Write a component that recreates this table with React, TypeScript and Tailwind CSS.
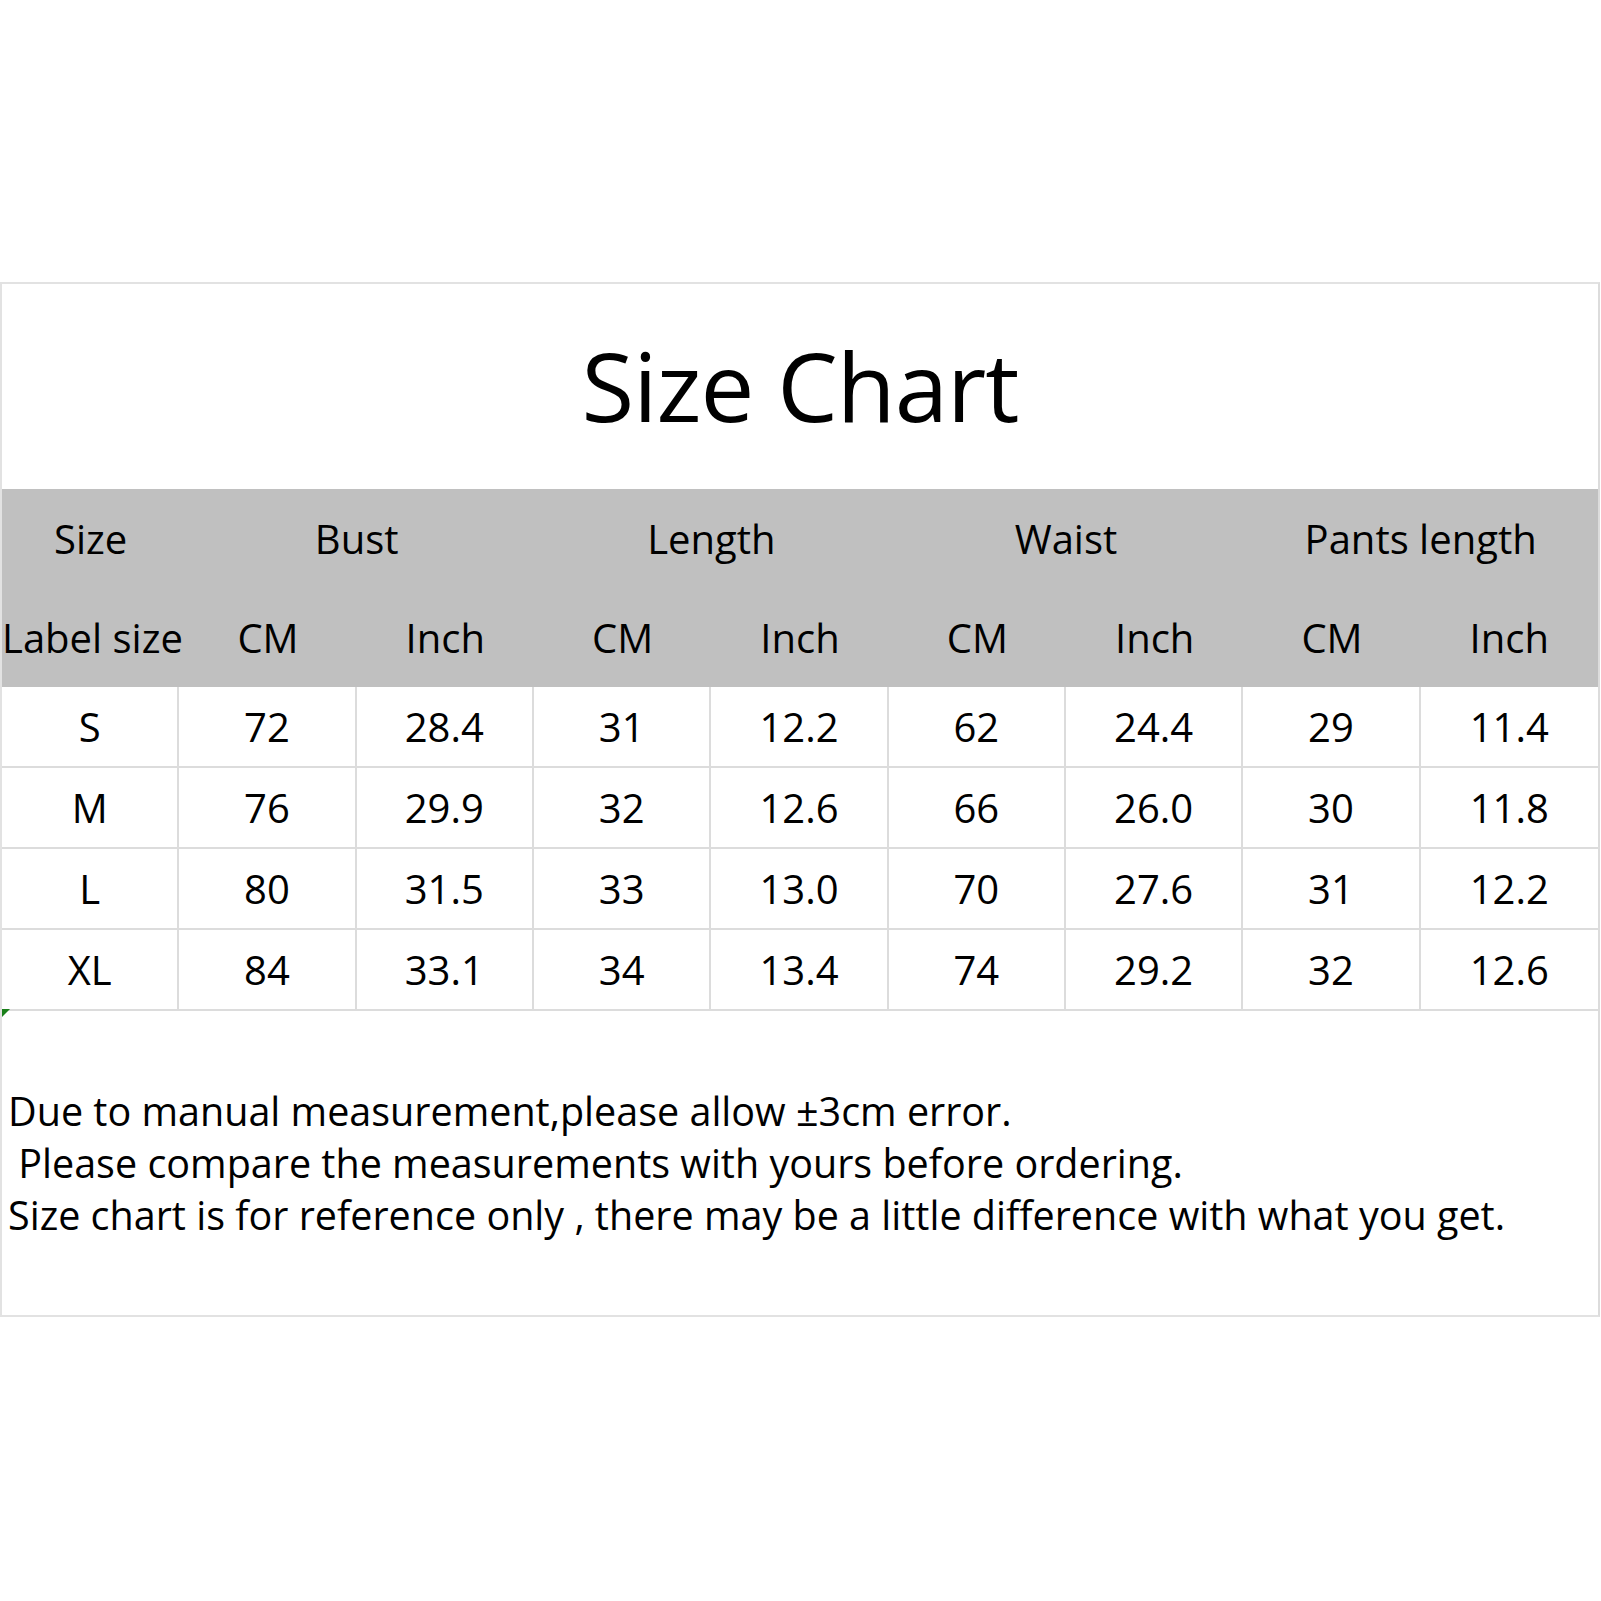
import React from "react";

const rows = [
  ["S", "72", "28.4", "31", "12.2", "62", "24.4", "29", "11.4"],
  ["M", "76", "29.9", "32", "12.6", "66", "26.0", "30", "11.8"],
  ["L", "80", "31.5", "33", "13.0", "70", "27.6", "31", "12.2"],
  ["XL", "84", "33.1", "34", "13.4", "74", "29.2", "32", "12.6"],
];

const sub = ["Label size", "CM", "Inch", "CM", "Inch", "CM", "Inch", "CM", "Inch"];

export default function App() {
  return (
    <div
      className="w-[1601px] h-[1601px] bg-white text-black"
      style={{ fontFamily: '"Open Sans", "Noto Sans", sans-serif' }}
    >
      <div className="pt-[282px]">
        <div className="w-[1600px] border-2 border-[#e2e2e2] border-r-[#dcdcdc]">
          <div className="h-[205px] flex items-center justify-center">
            <div className="text-[96px] leading-none tracking-[-1px] pb-[4px]">Size Chart</div>
          </div>
          <div className="bg-[#c0c0c0]">
            <div className="grid grid-cols-9 h-[99px] items-center text-[40px] leading-none">
              <div className="text-center">Size</div>
              <div className="col-span-2 text-center">Bust</div>
              <div className="col-span-2 text-center">Length</div>
              <div className="col-span-2 text-center">Waist</div>
              <div className="col-span-2 text-center">Pants length</div>
            </div>
            <div className="grid grid-cols-9 h-[99px] items-center text-[40px] leading-none">
              {sub.map((s, i) => (
                <div key={i} className="text-center whitespace-nowrap">
                  {s}
                </div>
              ))}
            </div>
          </div>
          {rows.map((r, ri) => (
            <div
              key={ri}
              className="grid grid-cols-9 h-[81px] border-b-2 border-[#dcdcdc] text-[40px] leading-none"
            >
              {r.map((c, ci) => (
                <div
                  key={ci}
                  className={
                    "flex items-center justify-center " +
                    (ci < 8 ? "border-r-2 border-[#dcdcdc]" : "")
                  }
                >
                  {c}
                </div>
              ))}
            </div>
          ))}
          <div className="relative h-[304px] pt-[74px] text-[39.5px] leading-[52px]">
            <div className="absolute left-0 top-[-2px] w-0 h-0 border-t-[8px] border-r-[8px] border-t-[#1a7f1a] border-r-transparent" />
            <div className="pl-[6px] whitespace-pre">Due to manual measurement,please allow ±3cm error.</div>
            <div className="pl-[6px] whitespace-pre"> Please compare the measurements with yours before ordering.</div>
            <div className="pl-[6px] whitespace-pre">Size chart is for reference only , there may be a little difference with what you get.</div>
          </div>
        </div>
      </div>
    </div>
  );
}
